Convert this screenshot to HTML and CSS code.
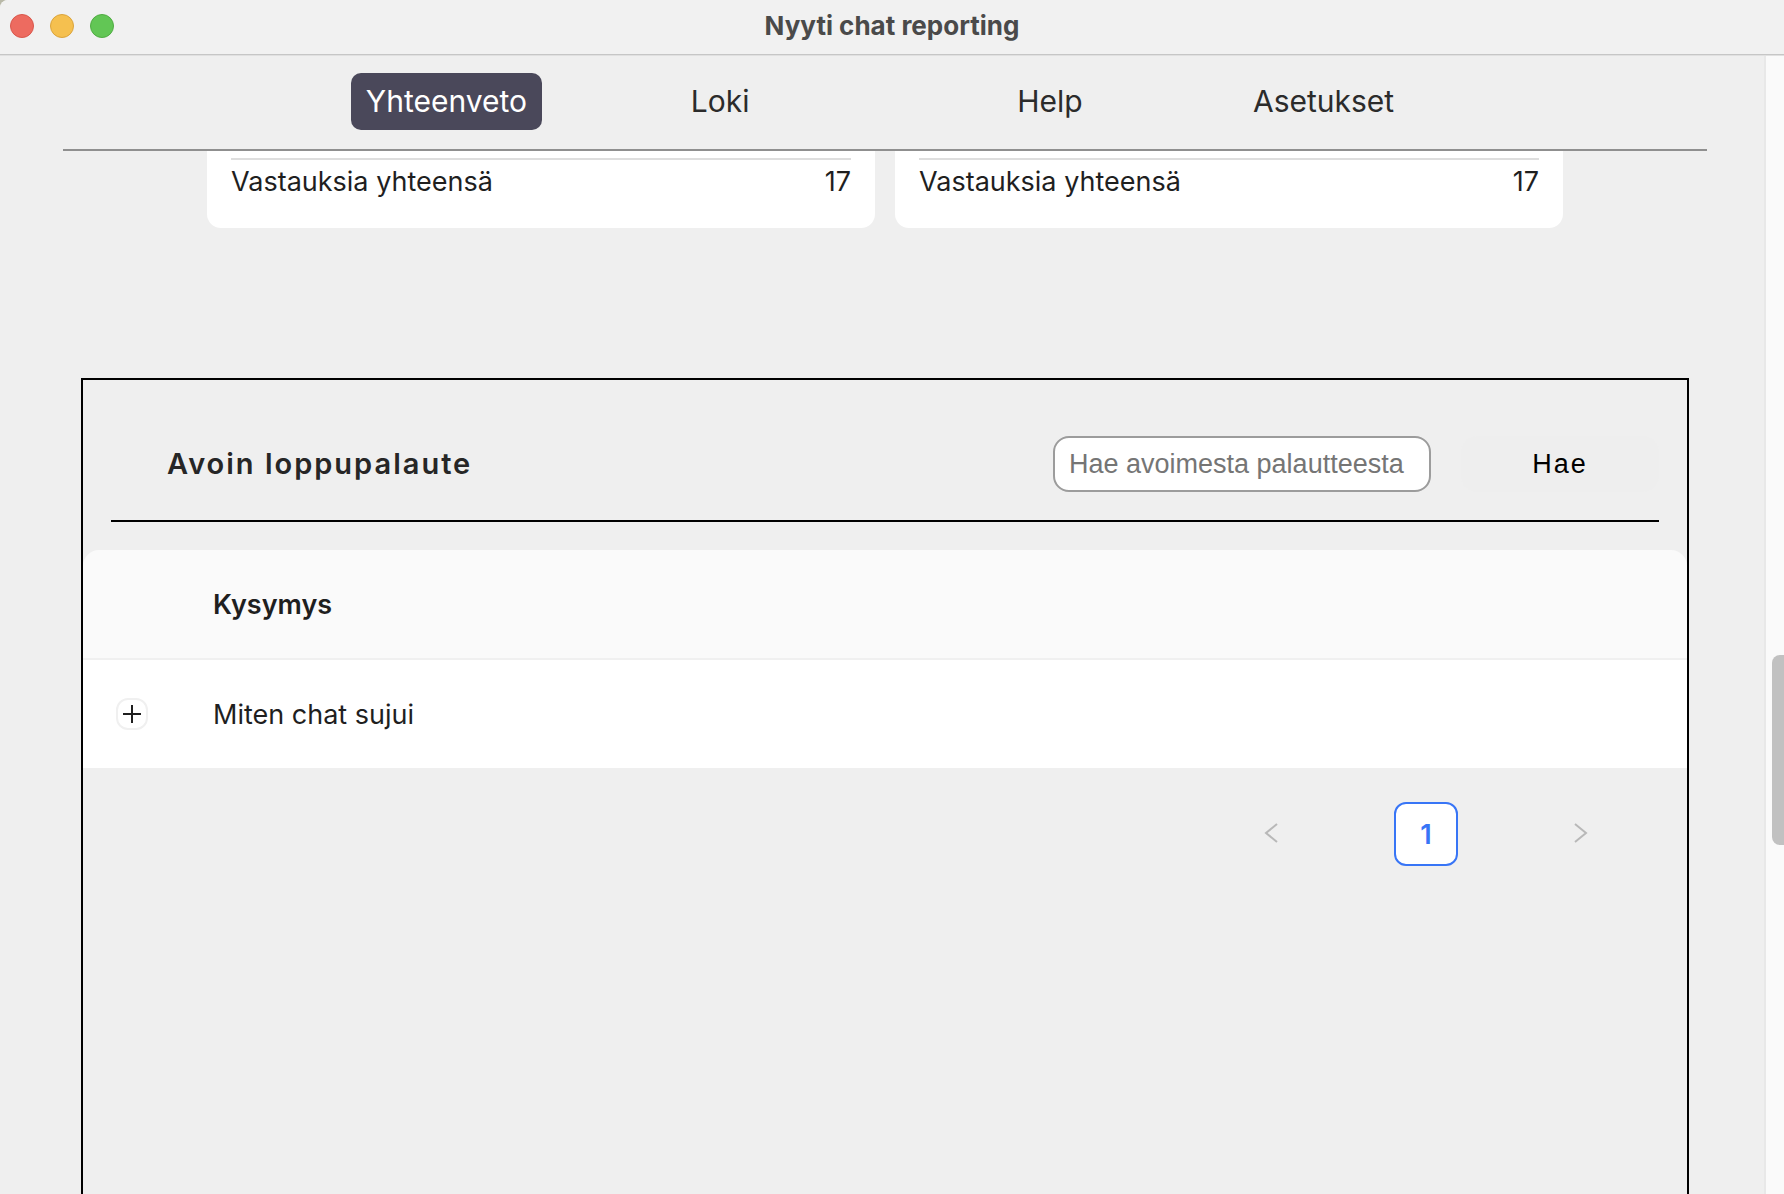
FILE: index.html
```html
<!DOCTYPE html>
<html lang="fi">
<head>
<meta charset="utf-8">
<title>Nyyti chat reporting</title>
<link rel="stylesheet" href="styles.css">
</head>
<body>
<div class="window">
  <header class="titlebar">
    <div class="lights">
      <button class="light light-close" aria-label="Sulje"></button>
      <button class="light light-min" aria-label="Pienennä"></button>
      <button class="light light-max" aria-label="Suurenna"></button>
    </div>
    <h1 class="window-title">Nyyti chat reporting</h1>
  </header>
  <div class="body">
    <main class="content">
      <nav class="nav">
        <div class="nav-group">
          <a class="nav-link active" href="#yhteenveto">Yhteenveto</a>
          <a class="nav-link" href="#loki">Loki</a>
        </div>
        <div class="nav-group">
          <a class="nav-link" href="#help">Help</a>
          <a class="nav-link" href="#asetukset">Asetukset</a>
        </div>
      </nav>
      <section class="cards">
        <div class="card"><div class="total"><span>Vastauksia yhteensä</span><span>17</span></div></div>
        <div class="card"><div class="total"><span>Vastauksia yhteensä</span><span>17</span></div></div>
      </section>
      <section class="panel">
        <div class="panel-head">
          <h2 class="panel-title">Avoin loppupalaute</h2>
          <form class="search">
            <input class="search-input" type="text" placeholder="Hae avoimesta palautteesta" aria-label="Hae avoimesta palautteesta">
            <button class="search-button" type="button">Hae</button>
          </form>
        </div>
        <table class="table">
          <thead>
            <tr><th class="expand-cell"></th><th>Kysymys</th></tr>
          </thead>
          <tbody>
            <tr>
              <td class="expand-cell"><button class="expand" aria-label="Laajenna"><svg width="18" height="18" viewBox="0 0 18 18"><path d="M0 9H18M9 0V18" stroke="#1f1f1f" stroke-width="2"/></svg></button></td>
              <td>Miten chat sujui</td>
            </tr>
          </tbody>
        </table>
        <div class="pager">
          <button class="page" disabled aria-label="Edellinen"><svg width="14" height="22" viewBox="0 0 14 22"><path d="M13 1L2 10L13 19" fill="none" stroke="#b8b8b8" stroke-width="2"/></svg></button>
          <button class="page current">1</button>
          <button class="page" disabled aria-label="Seuraava"><svg width="14" height="22" viewBox="0 0 14 22"><path d="M1 1L12 10L1 19" fill="none" stroke="#b8b8b8" stroke-width="2"/></svg></button>
        </div>
      </section>
    </main>
    <div class="scrollbar"><div class="thumb"></div></div>
  </div>
</div>
</body>
</html>
```
FILE: styles.css
```css
* { box-sizing: border-box; }

body {
  margin: 0;
  background: #b9b9a8;
  font-family: Inter, "Liberation Sans", sans-serif;
  font-size: 27px;
  color: #1f1f1f;
}

button { padding: 0; border: 0; background: none; font: inherit; color: inherit; }

.window {
  display: flex;
  flex-direction: column;
  height: 100vh;
  overflow: hidden;
  background: #efefef;
  border-radius: 8px 0 0 0;
}

.titlebar {
  display: grid;
  grid-template-columns: 1fr auto 1fr;
  align-items: center;
  height: 56px;
  flex: none;
  padding: 0 10px 4px;
  background: #f1f1f1;
  border-bottom: 1px solid #e0e0e0;
  box-shadow: inset 0 -1px #c6c6c6;
}

.lights { display: flex; gap: 16px; }
.light { width: 24px; height: 24px; border-radius: 50%; border: 1px solid; }
.light-close { background: #ed6b60; border-color: #d9574c; }
.light-min { background: #f5c04f; border-color: #dba43c; }
.light-max { background: #62c655; border-color: #50ac43; }

.window-title {
  margin: 0;
  font-size: 26px;
  line-height: 32px;
  font-weight: 700;
  color: #4a4a4a;
}

.body { display: flex; flex: 1; min-height: 0; }

.content {
  display: flex;
  flex-direction: column;
  flex: 1;
  min-width: 0;
  padding: 0 57px 0 63px;
}

.nav {
  display: flex;
  justify-content: space-between;
  flex: none;
  gap: 56px;
  height: 95px;
  padding: 17px 15% 0;
  border-bottom: 2px solid #8f8f8f;
}

.nav-group { display: grid; grid-template-columns: 1fr 1fr; justify-items: center; flex: 1; }

.nav-link {
  height: 57px;
  padding: 0 15px;
  border-radius: 10px;
  font-size: 30px;
  line-height: 57px;
  color: #2b2b2b;
  text-decoration: none;
}

.nav-link.active { background: #4a485a; color: #fff; }

.cards { display: flex; gap: 20px; padding: 0 144px; }

.card {
  flex: 1;
  padding: 7px 24px 30px;
  background: #fff;
  border-radius: 0 0 14px 14px;
}

.total {
  display: flex;
  justify-content: space-between;
  padding-top: 6px;
  border-top: 2px solid #dedede;
  line-height: 32px;
}

.panel {
  display: flex;
  flex-direction: column;
  flex: 1;
  margin: 150px 18px 0;
  border: 2px solid #000;
  border-bottom: 0;
}

.panel-head {
  display: flex;
  justify-content: space-between;
  align-items: center;
  margin: 0 28px 28px;
  padding: 56px 0 28px 56px;
  border-bottom: 2px solid #000;
}

.panel-title {
  margin: 0;
  font-size: 29px;
  line-height: 56px;
  font-weight: 600;
  letter-spacing: 2px;
  color: #262626;
}

.search { display: flex; gap: 30px; }

.search-input {
  width: 378px;
  height: 56px;
  padding: 0 14px;
  border: 2px solid #9c9c9c;
  border-radius: 16px;
  background: #fff;
  font-family: "Liberation Sans", Arial, sans-serif;
  font-size: 27px;
}

.search-input::placeholder { color: #757575; }

.search-button {
  width: 198px;
  height: 56px;
  border-radius: 16px;
  background: #eee;
  font-family: "Liberation Sans", Arial, sans-serif;
  letter-spacing: 2px;
  color: #000;
}

.table { width: 100%; border-collapse: separate; border-spacing: 0; }

.table th, .table td { height: 108px; padding: 0; text-align: left; }
.table th { height: 110px; background: #fafafa; border-bottom: 2px solid #f0f0f0; font-weight: 600; }
.table td { background: #fff; }
.table th:first-child { border-top-left-radius: 16px; }
.table th:last-child { border-top-right-radius: 16px; }
.table .expand-cell { width: 130px; padding-left: 33px; }

.expand {
  display: flex;
  align-items: center;
  justify-content: center;
  width: 32px;
  height: 32px;
  border: 2px solid #f0f0f0;
  border-radius: 12px;
  background: #fff;
}

.pager { display: flex; justify-content: flex-end; gap: 91px; padding: 34px 74px; }

.page {
  display: flex;
  align-items: center;
  justify-content: center;
  width: 64px;
  height: 64px;
}

.current {
  border: 2px solid #3875f6;
  border-radius: 12px;
  background: #fff;
  font-weight: 600;
  color: #3875f6;
}

.scrollbar {
  flex: none;
  width: 20px;
  padding: 599px 0 0 6px;
  background: #fafafa;
  border-left: 2px solid #e8e8e8;
}

.thumb { height: 190px; background: #c1c1c1; border-radius: 8px 0 0 8px; }
```
